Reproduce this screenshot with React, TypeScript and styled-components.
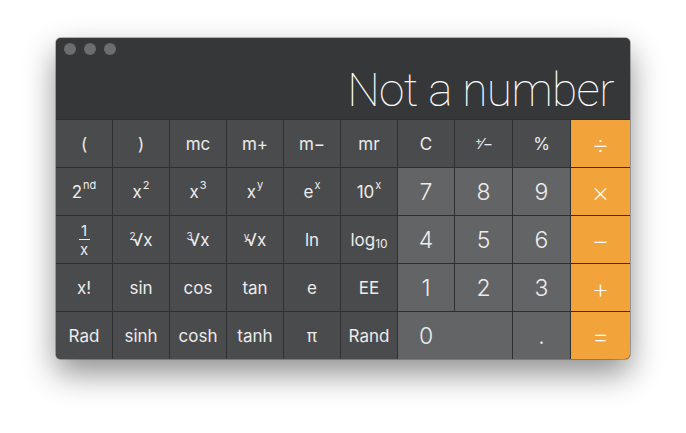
import React from "react";
import styled, { createGlobalStyle } from "styled-components";

const Global = createGlobalStyle`
  html, body { margin: 0; padding: 0; background: #ffffff; }
  body { font-family: Inter, "Liberation Sans", sans-serif; }
`;

const Page = styled.div`
  width: 686px;
  height: 433px;
  padding: 38px 0 0 56px;
  box-sizing: border-box;
`;

const Window = styled.div`
  width: 574px;
  height: 321px;
  border-radius: 5px;
  overflow: hidden;
  background: #2e2f31;
  box-shadow: 0 14px 32px rgba(0, 0, 0, 0.45), 0 0 0 1px rgba(0, 0, 0, 0.25);
  display: flex;
  flex-direction: column;
`;

const Display = styled.div`
  height: 81px;
  background: #363739;
  display: flex;
  flex-direction: column;
  justify-content: space-between;
  padding: 5px 16px 0 8px;
  box-sizing: border-box;
`;

const Lights = styled.div`
  display: flex;
  gap: 8px;
`;

const Light = styled.span`
  width: 12px;
  height: 12px;
  border-radius: 50%;
  background: #6c6d6f;
`;

const Readout = styled.div`
  text-align: right;
  color: #ffffff;
  font-family: Roboto, "Liberation Sans", sans-serif;
  font-weight: 100;
  font-size: 46px;
  line-height: 46px;
  letter-spacing: -0.6px;
  margin-bottom: 6px;
`;

const Pad = styled.div`
  flex: 1;
  display: grid;
  grid-template-columns: repeat(7, 56px) 57px 57px 1fr;
  grid-template-rows: repeat(5, 1fr);
  gap: 1px;
  padding-top: 1px;
  background: #2e2f31;
`;

type Variant = "fn" | "digit" | "op";

const colors: Record<Variant, string> = {
  fn: "#4a4b4d",
  digit: "#636466",
  op: "#f2a33a",
};

const Key = styled.div<{ $v: Variant; $span?: number; $left?: boolean }>`
  background: ${(p) => colors[p.$v]};
  grid-column: span ${(p) => p.$span ?? 1};
  display: flex;
  align-items: center;
  justify-content: ${(p) => (p.$left ? "flex-start" : "center")};
  color: ${(p) => (p.$v === "op" ? "#ffffff" : "#ececec")};
  font-size: ${(p) => (p.$v === "fn" ? "17px" : "23px")};
  font-weight: ${(p) => (p.$v === "fn" ? 400 : 300)};
  font-family: Inter, "Liberation Sans", sans-serif;
  user-select: none;
`;

const ZeroBox = styled.span`
  width: 56px;
  text-align: center;
`;

const Sup = styled.sup`
  font-size: 11px;
  vertical-align: 0;
  position: relative;
  top: -7px;
  margin-left: 1px;
`;

const Sub = styled.sub`
  font-size: 12px;
  vertical-align: 0;
  position: relative;
  top: 4px;
`;

const Root = styled.span`
  display: inline-flex;
  align-items: baseline;
`;

const RootIdx = styled.span`
  font-size: 10px;
  position: relative;
  top: -6px;
  margin-right: -3px;
`;

const Frac = styled.span`
  display: inline-flex;
  flex-direction: column;
  align-items: center;
  font-size: 15px;
  line-height: 15px;
`;

const FracBar = styled.span`
  width: 11px;
  height: 1px;
  background: #ececec;
  margin: 1px 0 2px;
`;

const OpGlyph = styled.span`
  font-size: 28px;
  font-weight: 200;
`;

const PlusMinus = styled.span`
  display: inline-flex;
  align-items: center;
  font-size: 15px;
`;

const root = (i: string) => (
  <Root>
    <RootIdx>{i}</RootIdx>√x
  </Root>
);

export default function App() {
  return (
    <>
      <Global />
      <Page>
        <Window>
          <Display>
            <Lights>
              <Light />
              <Light />
              <Light />
            </Lights>
            <Readout>Not a number</Readout>
          </Display>
          <Pad>
            <Key $v="fn">(</Key>
            <Key $v="fn">)</Key>
            <Key $v="fn">mc</Key>
            <Key $v="fn">m+</Key>
            <Key $v="fn">m−</Key>
            <Key $v="fn">mr</Key>
            <Key $v="fn">C</Key>
            <Key $v="fn">
              <PlusMinus>
                <Sup style={{ top: -3, marginRight: -2 }}>+</Sup>⁄−
              </PlusMinus>
            </Key>
            <Key $v="fn">%</Key>
            <Key $v="op"><OpGlyph>÷</OpGlyph></Key>

            <Key $v="fn">2<Sup>nd</Sup></Key>
            <Key $v="fn">x<Sup>2</Sup></Key>
            <Key $v="fn">x<Sup>3</Sup></Key>
            <Key $v="fn">x<Sup>y</Sup></Key>
            <Key $v="fn">e<Sup>x</Sup></Key>
            <Key $v="fn">10<Sup>x</Sup></Key>
            <Key $v="digit">7</Key>
            <Key $v="digit">8</Key>
            <Key $v="digit">9</Key>
            <Key $v="op"><OpGlyph>×</OpGlyph></Key>

            <Key $v="fn">
              <Frac>
                <span>1</span>
                <FracBar />
                <span>x</span>
              </Frac>
            </Key>
            <Key $v="fn">{root("2")}</Key>
            <Key $v="fn">{root("3")}</Key>
            <Key $v="fn">{root("y")}</Key>
            <Key $v="fn">ln</Key>
            <Key $v="fn">log<Sub>10</Sub></Key>
            <Key $v="digit">4</Key>
            <Key $v="digit">5</Key>
            <Key $v="digit">6</Key>
            <Key $v="op"><OpGlyph>−</OpGlyph></Key>

            <Key $v="fn">x!</Key>
            <Key $v="fn">sin</Key>
            <Key $v="fn">cos</Key>
            <Key $v="fn">tan</Key>
            <Key $v="fn">e</Key>
            <Key $v="fn">EE</Key>
            <Key $v="digit">1</Key>
            <Key $v="digit">2</Key>
            <Key $v="digit">3</Key>
            <Key $v="op"><OpGlyph>+</OpGlyph></Key>

            <Key $v="fn">Rad</Key>
            <Key $v="fn">sinh</Key>
            <Key $v="fn">cosh</Key>
            <Key $v="fn">tanh</Key>
            <Key $v="fn">π</Key>
            <Key $v="fn">Rand</Key>
            <Key $v="digit" $span={2} $left>
              <ZeroBox>0</ZeroBox>
            </Key>
            <Key $v="digit">.</Key>
            <Key $v="op"><OpGlyph>=</OpGlyph></Key>
          </Pad>
        </Window>
      </Page>
    </>
  );
}
